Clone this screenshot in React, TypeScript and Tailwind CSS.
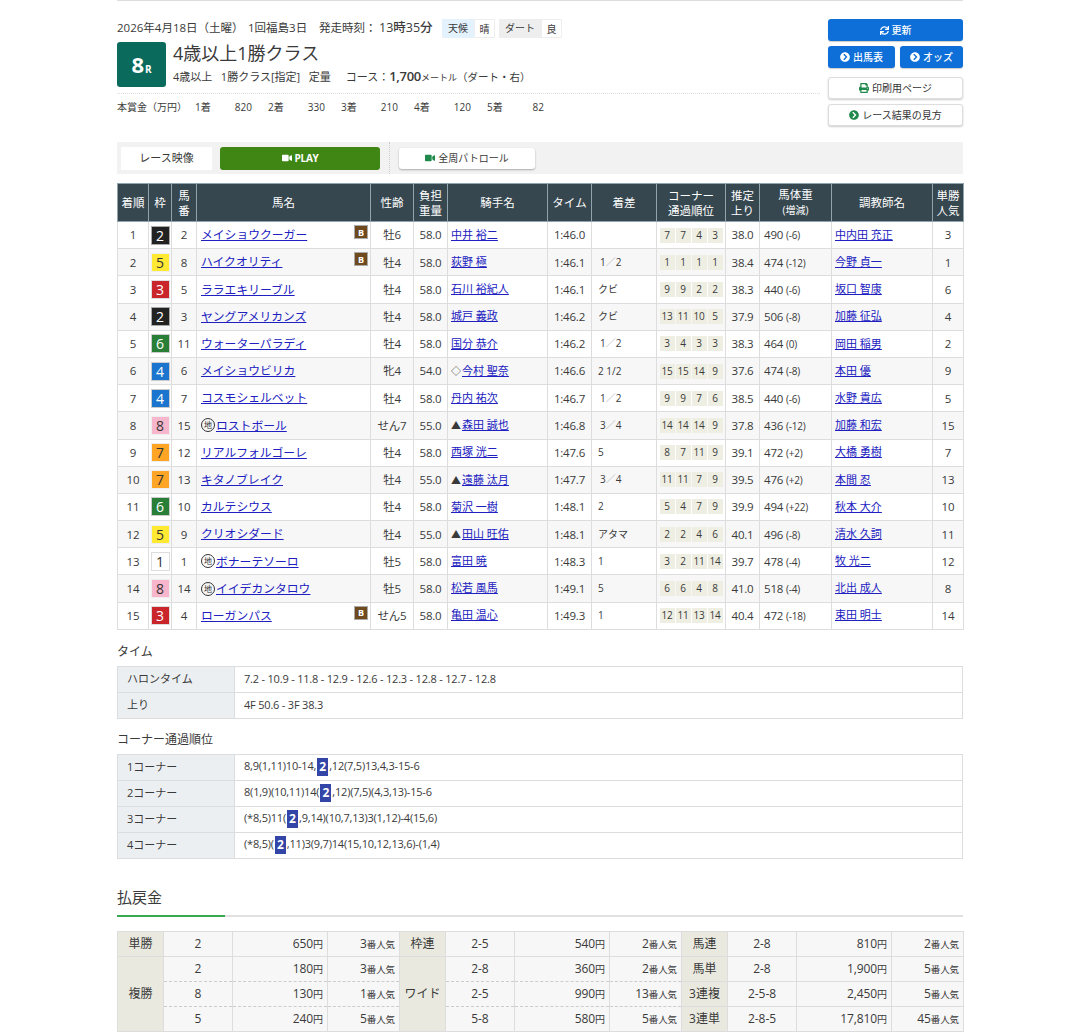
import { FaSync, FaChevronCircleRight, FaPrint, FaVideo } from "react-icons/fa";

type Row = { o: number; w: number; n: number; name: string; blk?: boolean; chi?: boolean; sex: string; kg: string; mark?: string; j: string; t: string; diff: string; c: string[]; up: string; bw: string; d: string; tr: string; pop: number };

const rows: Row[] = [
  { o: 1, w: 2, n: 2, name: "メイショウクーガー", blk: true, sex: "牡6", kg: "58.0", j: "中井 裕二", t: "1:46.0", diff: "", c: ["7", "7", "4", "3"], up: "38.0", bw: "490", d: "(-6)", tr: "中内田 充正", pop: 3 },
  { o: 2, w: 5, n: 8, name: "ハイクオリティ", blk: true, sex: "牡4", kg: "58.0", j: "荻野 極", t: "1:46.1", diff: "1／2", c: ["1", "1", "1", "1"], up: "38.4", bw: "474", d: "(-12)", tr: "今野 貞一", pop: 1 },
  { o: 3, w: 3, n: 5, name: "ララエキリーブル", sex: "牡4", kg: "58.0", j: "石川 裕紀人", t: "1:46.1", diff: "クビ", c: ["9", "9", "2", "2"], up: "38.3", bw: "440", d: "(-6)", tr: "坂口 智康", pop: 6 },
  { o: 4, w: 2, n: 3, name: "ヤングアメリカンズ", sex: "牡4", kg: "58.0", j: "城戸 義政", t: "1:46.2", diff: "クビ", c: ["13", "11", "10", "5"], up: "37.9", bw: "506", d: "(-8)", tr: "加藤 征弘", pop: 4 },
  { o: 5, w: 6, n: 11, name: "ウォーターパラディ", sex: "牡4", kg: "58.0", j: "国分 恭介", t: "1:46.2", diff: "1／2", c: ["3", "4", "3", "3"], up: "38.3", bw: "464", d: "(0)", tr: "岡田 稲男", pop: 2 },
  { o: 6, w: 4, n: 6, name: "メイショウビリカ", sex: "牝4", kg: "54.0", mark: "◇", j: "今村 聖奈", t: "1:46.6", diff: "2 1/2", c: ["15", "15", "14", "9"], up: "37.6", bw: "474", d: "(-8)", tr: "本田 優", pop: 9 },
  { o: 7, w: 4, n: 7, name: "コスモシェルベット", sex: "牡4", kg: "58.0", j: "丹内 祐次", t: "1:46.7", diff: "1／2", c: ["9", "9", "7", "6"], up: "38.5", bw: "440", d: "(-6)", tr: "水野 貴広", pop: 5 },
  { o: 8, w: 8, n: 15, name: "ロストボール", chi: true, sex: "せん7", kg: "55.0", mark: "▲", j: "森田 誠也", t: "1:46.8", diff: "3／4", c: ["14", "14", "14", "9"], up: "37.8", bw: "436", d: "(-12)", tr: "加藤 和宏", pop: 15 },
  { o: 9, w: 7, n: 12, name: "リアルフォルゴーレ", sex: "牡4", kg: "58.0", j: "西塚 洸二", t: "1:47.6", diff: "5", c: ["8", "7", "11", "9"], up: "39.1", bw: "472", d: "(+2)", tr: "大橋 勇樹", pop: 7 },
  { o: 10, w: 7, n: 13, name: "キタノブレイク", sex: "牡4", kg: "55.0", mark: "▲", j: "遠藤 汰月", t: "1:47.7", diff: "3／4", c: ["11", "11", "7", "9"], up: "39.5", bw: "476", d: "(+2)", tr: "本間 忍", pop: 13 },
  { o: 11, w: 6, n: 10, name: "カルテシウス", sex: "牡4", kg: "58.0", j: "菊沢 一樹", t: "1:48.1", diff: "2", c: ["5", "4", "7", "9"], up: "39.9", bw: "494", d: "(+22)", tr: "秋本 大介", pop: 10 },
  { o: 12, w: 5, n: 9, name: "クリオシダード", sex: "牡4", kg: "55.0", mark: "▲", j: "田山 旺佑", t: "1:48.1", diff: "アタマ", c: ["2", "2", "4", "6"], up: "40.1", bw: "496", d: "(-8)", tr: "清水 久詞", pop: 11 },
  { o: 13, w: 1, n: 1, name: "ボナーテソーロ", chi: true, sex: "牡5", kg: "58.0", j: "富田 暁", t: "1:48.3", diff: "1", c: ["3", "2", "11", "14"], up: "39.7", bw: "478", d: "(-4)", tr: "牧 光二", pop: 12 },
  { o: 14, w: 8, n: 14, name: "イイデカンタロウ", chi: true, sex: "牡5", kg: "58.0", j: "松若 風馬", t: "1:49.1", diff: "5", c: ["6", "6", "4", "8"], up: "41.0", bw: "518", d: "(-4)", tr: "北出 成人", pop: 8 },
  { o: 15, w: 3, n: 4, name: "ローガンパス", blk: true, sex: "せん5", kg: "58.0", j: "亀田 温心", t: "1:49.3", diff: "1", c: ["12", "11", "13", "14"], up: "40.4", bw: "472", d: "(-18)", tr: "束田 明士", pop: 14 },
];

const wakuClass: Record<number, string> = {
  1: "bg-white text-[#333] border-[#ddd]",
  2: "bg-[#222222] text-white border-[#aaa]",
  3: "bg-[#c9252b] text-white border-[#ddd]",
  4: "bg-[#1b75cf] text-white border-[#ccc]",
  5: "bg-[#ffe933] text-[#333] border-[#eee]",
  6: "bg-[#2a7f38] text-white border-[#ccc]",
  7: "bg-[#ffa526] text-[#333] border-[#eee]",
  8: "bg-[#f7b6cb] text-[#333] border-[#eee]",
};

const widths = [31, 23, 25, 174, 43, 34, 100, 44, 65, 69, 34, 72, 101, 31];
const heads: React.ReactNode[] = ["着順", "枠", <>馬<br />番</>, "馬名", "性齢", <>負担<br />重量</>, "騎手名", "タイム", "着差", <>コーナー<br />通過順位</>, <>推定<br />上り</>, <>馬体重<br /><span className="text-[10px]">(増減)</span></>, "調教師名", <>単勝<br />人気</>];

function Diff({ v }: { v: string }) {
  if (v.includes("／")) {
    const [a, b] = v.split("／");
    return <span className="pl-[2px]">{a}<span className="text-[#aaa]">／</span>{b}</span>;
  }
  return <>{v}</>;
}

function ResultTable() {
  const td = "border border-[#ddd] px-0 py-0";
  const num = "text-[11.5px] tracking-[-0.2px] text-center";
  return (
    <table className="w-[846px] table-fixed border-collapse">
      <colgroup>{widths.map((w, i) => <col key={i} style={{ width: w }} />)}</colgroup>
      <thead>
        <tr className="h-[38px] bg-[#37474f] text-white">
          {heads.map((h, i) => (
            <th key={i} className="border border-[#90a4ae] text-[11.5px] leading-[15px] font-normal text-center px-0">{h}</th>
          ))}
        </tr>
      </thead>
      <tbody>
        {rows.map((r, i) => (
          <tr key={r.o} className={`h-[27.2px] ${i % 2 ? "bg-[#f7f7f7]" : "bg-white"}`}>
            <td className={`${td} ${num}`}>{r.o}</td>
            <td className={td}>
              <div className="flex justify-center">
                <span className={`flex items-center justify-center w-[19px] h-[19px] border text-[14px] font-medium ${wakuClass[r.w]}`}>{r.w}</span>
              </div>
            </td>
            <td className={`${td} ${num}`}>{r.n}</td>
            <td className={`${td} relative pl-[4px] text-[11.8px]`}>
              <div className="flex items-center">
                {r.chi && (
                  <span className="flex items-center justify-center w-[14px] h-[14px] mr-[1px] rounded-full border border-[#333] text-[8px] leading-none text-[#333]">地</span>
                )}
                <a href="#" className="text-[#2020c0] underline">{r.name}</a>
              </div>
              {r.blk && (
                <span className="absolute right-[2px] top-[3px] flex items-center justify-center w-[14px] h-[14px] bg-[#6f4a1f] border border-[#aaa] text-white text-[9px] font-bold leading-none">B</span>
              )}
            </td>
            <td className={`${td} ${num}`}>{r.sex}</td>
            <td className={`${td} ${num}`}>{r.kg}</td>
            <td className={`${td} pl-[3px] text-[11px]`}>
              {r.mark && <span className="mr-[1px] text-[10px]">{r.mark}</span>}
              <a href="#" className="text-[#2020c0] underline">{r.j}</a>
            </td>
            <td className={`${td} ${num}`}>{r.t}</td>
            <td className={`${td} pl-[6px] text-[10px]`}><Diff v={r.diff} /></td>
            <td className={td}>
              <div className="flex justify-center gap-[1px]">
                {r.c.map((x, k) => (
                  <span key={k} className="w-[15px] h-[15px] flex items-center justify-center bg-[#eeeee2] text-[10px] tracking-[-0.3px]">{x}</span>
                ))}
              </div>
            </td>
            <td className={`${td} ${num}`}>{r.up}</td>
            <td className={`${td} pl-[4px] text-[11.5px] tracking-[-0.2px]`}>{r.bw} <span className="text-[10px]">{r.d}</span></td>
            <td className={`${td} pl-[3px] text-[11px]`}><a href="#" className="text-[#2020c0] underline">{r.tr}</a></td>
            <td className={`${td} ${num}`}>{r.pop}</td>
          </tr>
        ))}
      </tbody>
    </table>
  );
}

function Two() {
  return <span className="inline-block w-[11px] h-[18px] mx-[1px] leading-[18px] bg-[#3346a8] text-white font-bold text-center text-[12px] tracking-normal align-middle">2</span>;
}

function KV({ rows }: { rows: [string, React.ReactNode][] }) {
  return (
    <table className="w-[846px] table-fixed border-collapse">
      <colgroup><col style={{ width: 117 }} /><col /></colgroup>
      <tbody>
        {rows.map(([k, v], i) => (
          <tr key={i} className="h-[26px]">
            <th className="border border-[#ddd] bg-[#eceff1] font-normal text-left pl-[9px] text-[11px]">{k}</th>
            <td className="border border-[#ddd] pl-[9px] text-[11px] tracking-[-0.2px]">{v}</td>
          </tr>
        ))}
      </tbody>
    </table>
  );
}

const pw = [46, 69, 95, 72, 46, 69, 95, 72, 46, 69, 95, 72];
const lab = "border border-[#ddd] bg-[#e9e9df] text-center text-[12px] font-normal";
const vb = "border-x border-[#ddd] bg-[#f7f7f7] text-[12px] tracking-[-0.1px]";

function Pay({ v, y, p, dash, top }: { v: string; y: string; p: string; dash?: boolean; top?: boolean }) {
  const b = dash ? "border-b border-b-[#ccc]" : "border-b border-b-[#ddd]";
  const common = `${vb} ${b} ${top ? "border-t border-t-[#ddd]" : ""}`;
  const st = dash ? { borderBottomStyle: "dashed" as const } : undefined;
  return (
    <>
      <td style={st} className={`${common} text-center`}>{v}</td>
      <td style={st} className={`${common} text-right pr-[4px]`}>{y}<span className="text-[10px]">円</span></td>
      <td style={st} className={`${common} text-right pr-[4px]`}>{p}<span className="text-[9.5px]">番人気</span></td>
    </>
  );
}

function PayTable() {
  return (
    <table className="w-[846px] table-fixed border-collapse">
      <colgroup>{pw.map((w, i) => <col key={i} style={{ width: w }} />)}</colgroup>
      <tbody>
        <tr className="h-[25px]">
          <th className={lab}>単勝</th><Pay v="2" y="650" p="3" top />
          <th className={lab}>枠連</th><Pay v="2-5" y="540" p="2" top />
          <th className={lab}>馬連</th><Pay v="2-8" y="810" p="2" top />
        </tr>
        <tr className="h-[25px]">
          <th rowSpan={3} className={lab}>複勝</th><Pay v="2" y="180" p="3" dash />
          <th rowSpan={3} className={lab}>ワイド</th><Pay v="2-8" y="360" p="2" dash />
          <th className={lab}>馬単</th><Pay v="2-8" y="1,900" p="5" />
        </tr>
        <tr className="h-[25px]">
          <Pay v="8" y="130" p="1" dash />
          <Pay v="2-5" y="990" p="13" dash />
          <th className={lab}>3連複</th><Pay v="2-5-8" y="2,450" p="5" />
        </tr>
        <tr className="h-[25px]">
          <Pay v="5" y="240" p="5" />
          <Pay v="5-8" y="580" p="5" />
          <th className={lab}>3連単</th><Pay v="2-8-5" y="17,810" p="45" />
        </tr>
      </tbody>
    </table>
  );
}

const blueBtn = "flex items-center justify-center gap-[3px] h-[22px] rounded-[3px] bg-[#0f6fd8] text-white text-[10px] font-medium shadow-[0_1px_1px_rgba(0,0,0,0.2)]";
const whiteBtn = "flex items-center justify-center gap-[3px] h-[22px] rounded-[3px] bg-white border border-[#ddd] text-[#333] text-[10px] shadow-[0_1px_2px_rgba(0,0,0,0.2)]";

export default function App() {
  return (
    <div className="h-[1036px] overflow-hidden bg-white text-[#3a3a3a] font-['Open_Sans','Noto_Sans_CJK_JP',sans-serif]">
      <div className="w-[846px] mx-auto border-t border-[#ddd]">
        <div className="flex pt-[17px]">
          <div className="w-[703px]">
            <div className="flex items-center h-[20px] text-[11.5px] whitespace-nowrap">
              <span className="w-[131px]">2026年4月18日（土曜）</span>
              <span className="w-[71px]">1回福島3日</span>
              <span className="w-[60px]">発走時刻：</span>
              <span className="w-[63px] text-[12.5px] font-medium">13時35分</span>
              <span className="flex text-[10px] leading-[19px] h-[19px]">
                <span className="w-[32px] text-center bg-[#e3f2fd]">天候</span>
                <span className="w-[21px] text-center bg-white border border-[#eee]">晴</span>
              </span>
              <span className="flex ml-[4px] text-[10px] leading-[19px] h-[19px]">
                <span className="w-[42px] text-center bg-[#eeeeee]">ダート</span>
                <span className="w-[21px] text-center bg-white border border-[#eee]">良</span>
              </span>
            </div>
            <div className="flex mt-[4px] gap-[7px]">
              <div className="flex items-baseline justify-center w-[49px] h-[45px] pt-[8px] rounded-[3px] bg-[#0a6b5c] text-white font-bold">
                <span className="text-[22px] leading-[28px]">8</span><span className="text-[10px] ml-[1px]">R</span>
              </div>
              <div>
                <div className="text-[18px] leading-[22px] h-[24px]">4歳以上1勝クラス</div>
                <div className="flex items-center mt-[1px] h-[20px] text-[11px] whitespace-nowrap">
                  <span>4歳以上&nbsp;&nbsp;&nbsp;1勝クラス[指定]&nbsp;&nbsp;&nbsp;定量</span>
                  <span className="ml-[15px]">コース：<span className="text-[13px] font-semibold tracking-[-0.3px]">1,700</span><span className="text-[9px]">メートル</span><span className="text-[10.5px]">（ダート・右）</span></span>
                </div>
              </div>
            </div>
            <div className="mt-[6px] border-t border-dotted border-[#ddd]" />
            <div className="flex items-center h-[27px] text-[10px]">
              <span className="w-[78px]">本賞金（万円）</span>
              {[["1着", "820"], ["2着", "330"], ["3着", "210"], ["4着", "120"], ["5着", "82"]].map(([a, b]) => (
                <span key={a} className="flex justify-between w-[73px] pr-[16px]"><span>{a}</span><span>{b}</span></span>
              ))}
            </div>
          </div>
          <div className="ml-[8px] w-[135px] flex flex-col pt-[1px]">
            <div className={blueBtn}><FaSync className="w-[9px] h-[9px]" />更新</div>
            <div className="flex gap-[5px] mt-[5px]">
              <div className={`${blueBtn} w-[67px]`}><FaChevronCircleRight className="w-[10px] h-[10px]" />出馬表</div>
              <div className={`${blueBtn} w-[63px]`}><FaChevronCircleRight className="w-[10px] h-[10px]" />オッズ</div>
            </div>
            <div className={`${whiteBtn} mt-[9px]`}><FaPrint className="w-[10px] h-[10px] text-[#1f8a4c]" />印刷用ページ</div>
            <div className={`${whiteBtn} mt-[5px]`}><FaChevronCircleRight className="w-[10px] h-[10px] text-[#1f8a4c]" />レース結果の見方</div>
          </div>
        </div>

        <div className="flex items-center h-[32px] mt-[16px] bg-[#f2f2f2] pl-[4px]">
          <div className="flex items-center justify-center w-[91px] h-[23px] bg-white text-[11px]">レース映像</div>
          <div className="flex items-center justify-center gap-[3px] w-[160px] h-[23px] ml-[8px] rounded-[3px] bg-[#3f8614] text-white text-[10px] font-bold tracking-[-0.3px]">
            <FaVideo className="w-[10px] h-[10px]" />PLAY
          </div>
          <div className="h-full ml-[9px] border-l border-dotted border-[#ccc]" />
          <div className="flex items-center justify-center gap-[3px] w-[136px] h-[21px] ml-[9px] rounded-[3px] bg-white text-[10px] shadow-[0_1px_2px_rgba(0,0,0,0.3)]">
            <FaVideo className="w-[10px] h-[10px] text-[#1f8a4c]" />全周パトロール
          </div>
        </div>

        <div className="mt-[9px]"><ResultTable /></div>

        <div className="mt-[13px] h-[17px] leading-[17px] text-[12px]">タイム</div>
        <div className="mt-[6px]">
          <KV rows={[
            ["ハロンタイム", "7.2 - 10.9 - 11.8 - 12.9 - 12.6 - 12.3 - 12.8 - 12.7 - 12.8"],
            ["上り", "4F 50.6 - 3F 38.3"],
          ]} />
        </div>

        <div className="mt-[12px] h-[17px] leading-[17px] text-[12px]">コーナー通過順位</div>
        <div className="mt-[6px]">
          <KV rows={[
            ["1コーナー", <>8,9(1,11)10-14,<Two />,12(7,5)13,4,3-15-6</>],
            ["2コーナー", <>8(1,9)(10,11)14(<Two />,12)(7,5)(4,3,13)-15-6</>],
            ["3コーナー", <>(*8,5)11(<Two />,9,14)(10,7,13)3(1,12)-4(15,6)</>],
            ["4コーナー", <>(*8,5)(<Two />,11)3(9,7)14(15,10,12,13,6)-(1,4)</>],
          ]} />
        </div>

        <div className="mt-[27px] h-[31px] leading-[22px] text-[15px] border-b-2 border-[#e0e0e0] relative">
          払戻金
          <span className="absolute left-0 bottom-[-2px] w-[108px] h-[2px] bg-[#38a853]" />
        </div>
        <div className="mt-[14px]"><PayTable /></div>
      </div>
    </div>
  );
}
